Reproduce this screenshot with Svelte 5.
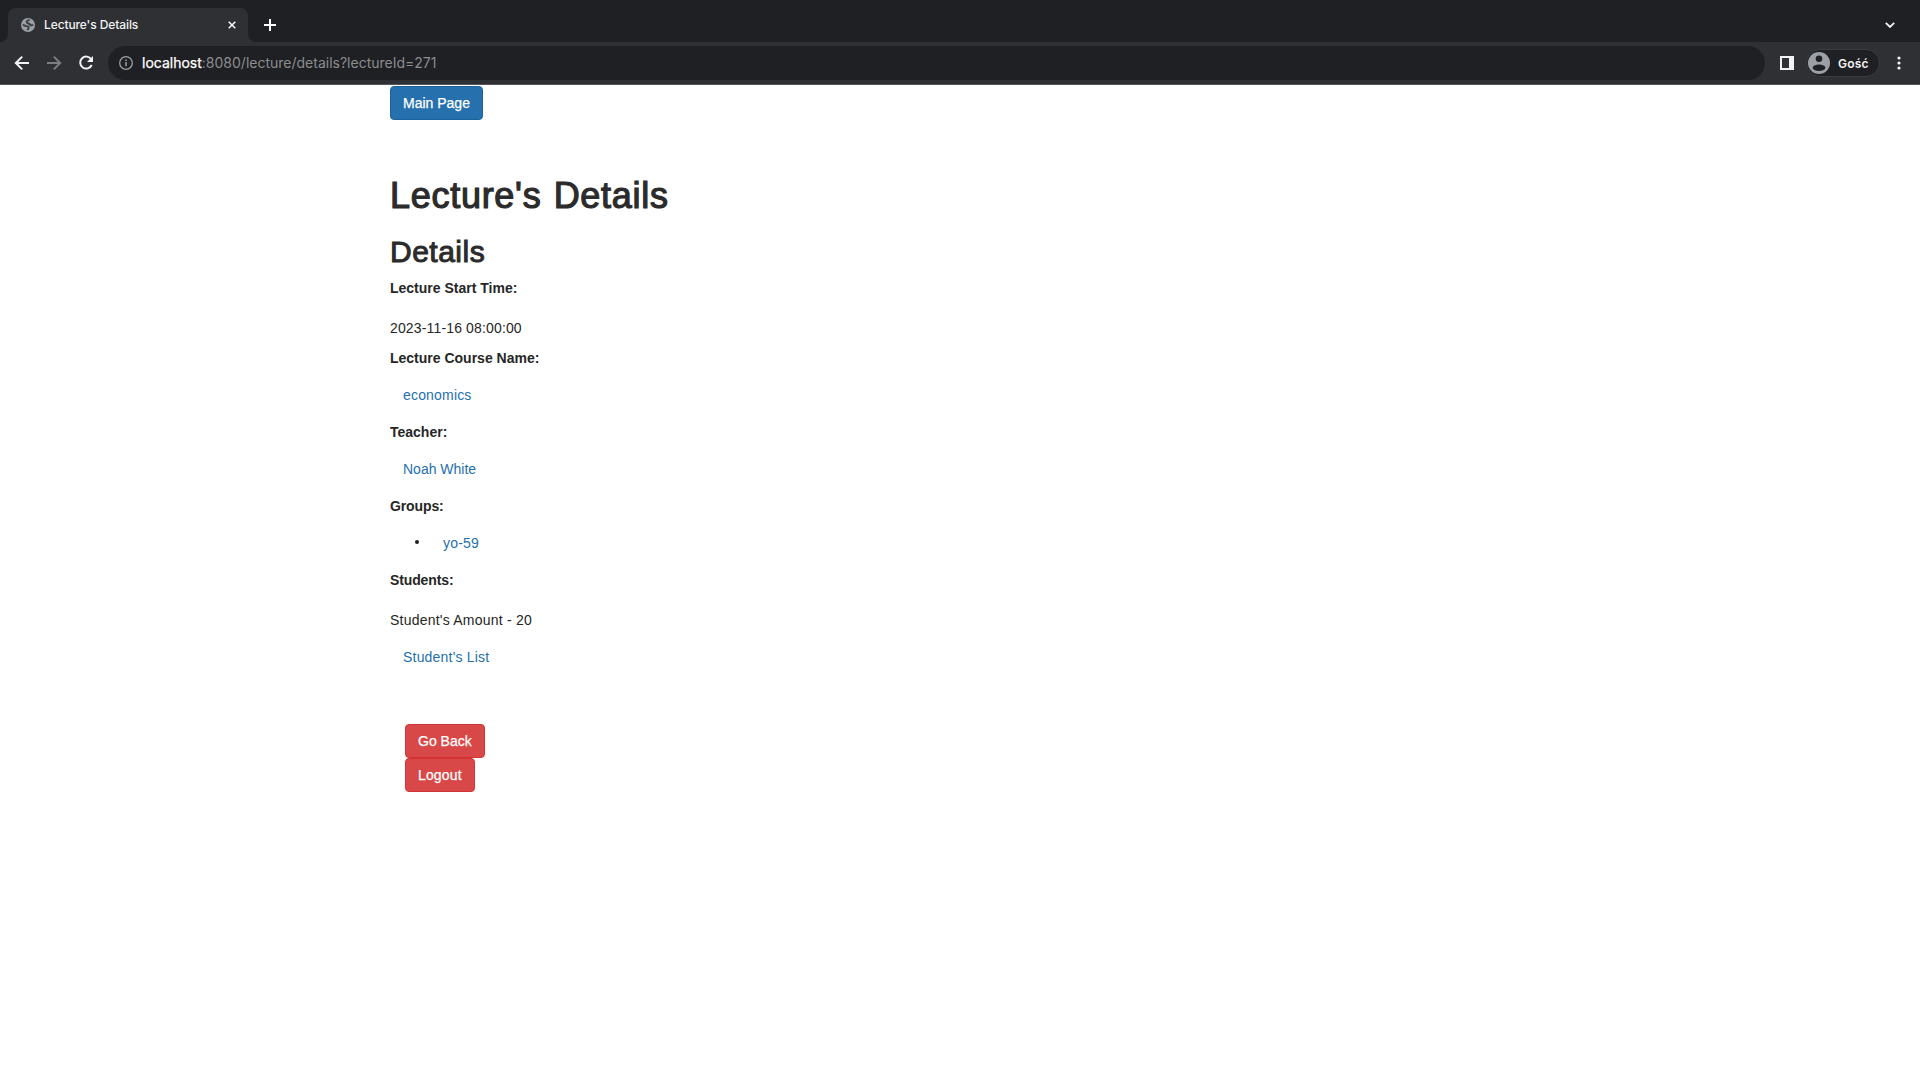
<script>
  const course = 'economics';
  const teacher = 'Noah White';
  const groups = ['yo-59'];
</script>

<div class="window">
  <header class="browser">
    <div class="tabs">
      <div class="tab">
        <svg class="globe" viewBox="0 0 14 14"><circle cx="7" cy="7" r="7" fill="#9aa0a6" /><path d="M8.6 2C6.4 2.2 5.2 3.4 5.8 4.6C6.5 5.8 8.4 5.2 9 6.5C9.4 7.4 11 7.6 12.3 6.8M1.7 7C3.3 6.8 4 8 5.4 8.1C8.6 8.2 8.3 10 6.2 12.2" fill="none" stroke="#3c4043" stroke-width="1.9" /></svg>
        <span class="tab-title">Lecture's Details</span>
        <svg class="close" viewBox="0 0 8 8"><path d="M.7.7 7.3 7.3M7.3.7.7 7.3" stroke="#f1f3f4" stroke-width="1.6" /></svg>
      </div>
      <svg class="plus" viewBox="0 0 12 12"><path d="M6 0V12M0 6H12" stroke="#fff" stroke-width="2" /></svg>
      <svg class="chevron" viewBox="0 0 10 6"><path d="M.8.8 5 5 9.2.8" fill="none" stroke="#f1f3f4" stroke-width="1.8" /></svg>
    </div>
    <div class="toolbar">
      <svg class="nav" viewBox="0 0 16 16"><path d="M15 8H2M8.2 1.6 1.8 8 8.2 14.4" fill="none" stroke="#f1f3f4" stroke-width="2" /></svg>
      <svg class="nav" viewBox="0 0 16 16"><path d="M1 8H14M7.8 1.6 14.2 8 7.8 14.4" fill="none" stroke="#7c7d80" stroke-width="2" /></svg>
      <svg class="nav" viewBox="0 0 16 16"><path d="M13.3 4.4A6 6 0 1 0 13.7 10" fill="none" stroke="#f1f3f4" stroke-width="2" /><path d="M15 1V7H9Z" fill="#f1f3f4" /></svg>
      <div class="address">
        <svg class="info" viewBox="0 0 14 14"><circle cx="7" cy="7" r="6.3" fill="none" stroke="#9aa0a6" stroke-width="1.3" /><path d="M7 6.1V10.3M7 3.5V5" stroke="#9aa0a6" stroke-width="1.5" /></svg>
        <span class="url"><span class="host">localhost</span>:8080/lecture/details?lectureId=271</span>
      </div>
      <svg class="panel" viewBox="0 0 14 14"><path d="M0 0H14V14H0ZM2 2V12H9V2Z" fill="#f1f3f4" fill-rule="evenodd" /></svg>
      <div class="profile">
        <svg class="avatar" viewBox="0 0 22 22"><circle cx="11" cy="11" r="11" fill="#9aa0a6" /><circle cx="11" cy="6.8" r="3.3" fill="#202124" /><ellipse cx="11" cy="15.8" rx="6.4" ry="3.2" fill="#202124" /></svg>
        <span>Gość</span>
      </div>
      <svg class="dots" viewBox="0 0 4 14"><circle cx="2" cy="2" r="1.6" /><circle cx="2" cy="7" r="1.6" /><circle cx="2" cy="12" r="1.6" /></svg>
    </div>
  </header>

  <main>
    <button class="btn primary">Main Page</button>
    <h1>Lecture's Details</h1>
    <h2>Details</h2>
    <div class="label start">Lecture Start Time:</div>
    <p class="time">2023-11-16 08:00:00</p>
    <div class="label">Lecture Course Name:</div>
    <a class="link" href="#course">{course}</a>
    <div class="label">Teacher:</div>
    <a class="link teacher" href="#teacher">{teacher}</a>
    <div class="label tight">Groups:</div>
    <ul>
      {#each groups as group}
        <li><a class="link" href="#group">{group}</a></li>
      {/each}
    </ul>
    <div class="label tight">Students:</div>
    <p class="amount">Student's Amount - 20</p>
    <a class="link students" href="#students">Student's List</a>
    <div class="actions">
      <button class="btn danger">Go Back</button>
      <button class="btn danger logout">Logout</button>
    </div>
  </main>
</div>

<style>
  :global(body) { margin: 0; background: #fff; overflow: hidden; }
  * { box-sizing: border-box; }
  svg { display: block; flex: none; }
  .window { height: 1080px; background: #fff; }
  .browser { height: 85px; background: #2f3033; border-bottom: 1px solid #55565a; font-family: Inter, sans-serif; }
  .tabs { height: 42px; background: #1f2023; padding: 8px 25px 0 8px; display: flex; align-items: center; }
  .tab { position: relative; width: 240px; height: 34px; background: #2f3033; border-radius: 8px 8px 0 0; padding: 0 12px 0 13px; display: flex; align-items: center; }
  .tab::before, .tab::after { content: ''; position: absolute; bottom: 0; width: 8px; height: 8px; }
  .tab::before { left: -8px; background: radial-gradient(circle at 0 0, #1f2023 7.5px, #2f3033 8.5px); }
  .tab::after { right: -8px; background: radial-gradient(circle at 100% 0, #1f2023 7.5px, #2f3033 8.5px); }
  .globe { width: 14px; height: 14px; }
  .tab-title { margin: -1px 0 0 9px; flex: 1; font-size: 12px; font-weight: 500; letter-spacing: -0.1px; color: #f1f3f4; }
  .close { width: 8px; height: 8px; }
  .plus { width: 12px; height: 12px; margin-left: 16px; }
  .chevron { width: 10px; height: 6px; margin-left: auto; }
  .toolbar { height: 42px; padding: 0 19px 0 14px; display: flex; align-items: center; }
  .nav { width: 16px; height: 16px; margin-right: 16px; }
  .address { flex: 1; height: 34px; margin: 0 15px 0 -2px; border-radius: 17px; background: #1f2023; padding-left: 11px; display: flex; align-items: center; }
  .info { width: 14px; height: 14px; }
  .url { margin: -1px 0 0 9px; font-size: 14px; color: #8b8c8e; white-space: nowrap; }
  .host { color: #fff; -webkit-text-stroke: 0.25px #fff; }
  .panel { width: 14px; height: 14px; }
  .profile { width: 74px; height: 28px; margin: 0 17px 0 12px; border: 1px solid #3b3c3f; border-radius: 14px; background: #1f2023; display: flex; align-items: center; padding-left: 1px; gap: 8px; color: #f1f3f4; font-size: 12px; font-weight: 600; letter-spacing: 0.2px; }
  .avatar { width: 22px; height: 22px; }
  .dots { width: 4px; height: 14px; fill: #f1f3f4; }

  main { width: 1140px; margin: 0 auto; padding-top: 1px; display: flex; flex-direction: column; align-items: flex-start; font: 14px/20px "Liberation Sans", Arial, sans-serif; color: #262626; }
  .btn { height: 34px; padding: 6px 12px; border: 1px solid; border-radius: 4px; font: inherit; color: #fff; -webkit-text-stroke: 0.25px #fff; }
  .primary { background: #2671ad; border-color: #1c639b; }
  .danger { background: #d84848; border-color: #d33333; }
  .logout { letter-spacing: 0.15px; }
  h1, h2 { margin: 0; font-weight: 400; line-height: 1.1; color: #2b2b2b; }
  h1 { margin-top: 56px; font-size: 36px; letter-spacing: 0.72px; word-spacing: 1.5px; -webkit-text-stroke: 1.2px #2b2b2b; }
  h2 { margin-top: 19px; font-size: 30px; letter-spacing: 0.5px; -webkit-text-stroke: 1px #2b2b2b; }
  .label { height: 20px; font-weight: 700; }
  .start { margin-top: 10px; }
  .tight { letter-spacing: -0.12px; }
  p { margin: 20px 0 0; }
  .time { margin-bottom: 10px; letter-spacing: 0.15px; }
  .link { display: block; padding: 7px 13px; margin: 10px 0; color: #1f6fae; text-decoration: none; letter-spacing: 0.18px; }
  .teacher { letter-spacing: 0; }
  .students { letter-spacing: 0.2px; }
  ul { margin: 0; padding-left: 25px; list-style: none; }
  li { display: flex; align-items: center; }
  li::before { content: ''; width: 4px; height: 4px; margin: -2px 11px 0 0; border-radius: 50%; background: #212121; }
  .amount { margin-bottom: 0; letter-spacing: 0.22px; }
  .actions { margin: 40px 0 0 15px; display: flex; flex-direction: column; align-items: flex-start; }
</style>
